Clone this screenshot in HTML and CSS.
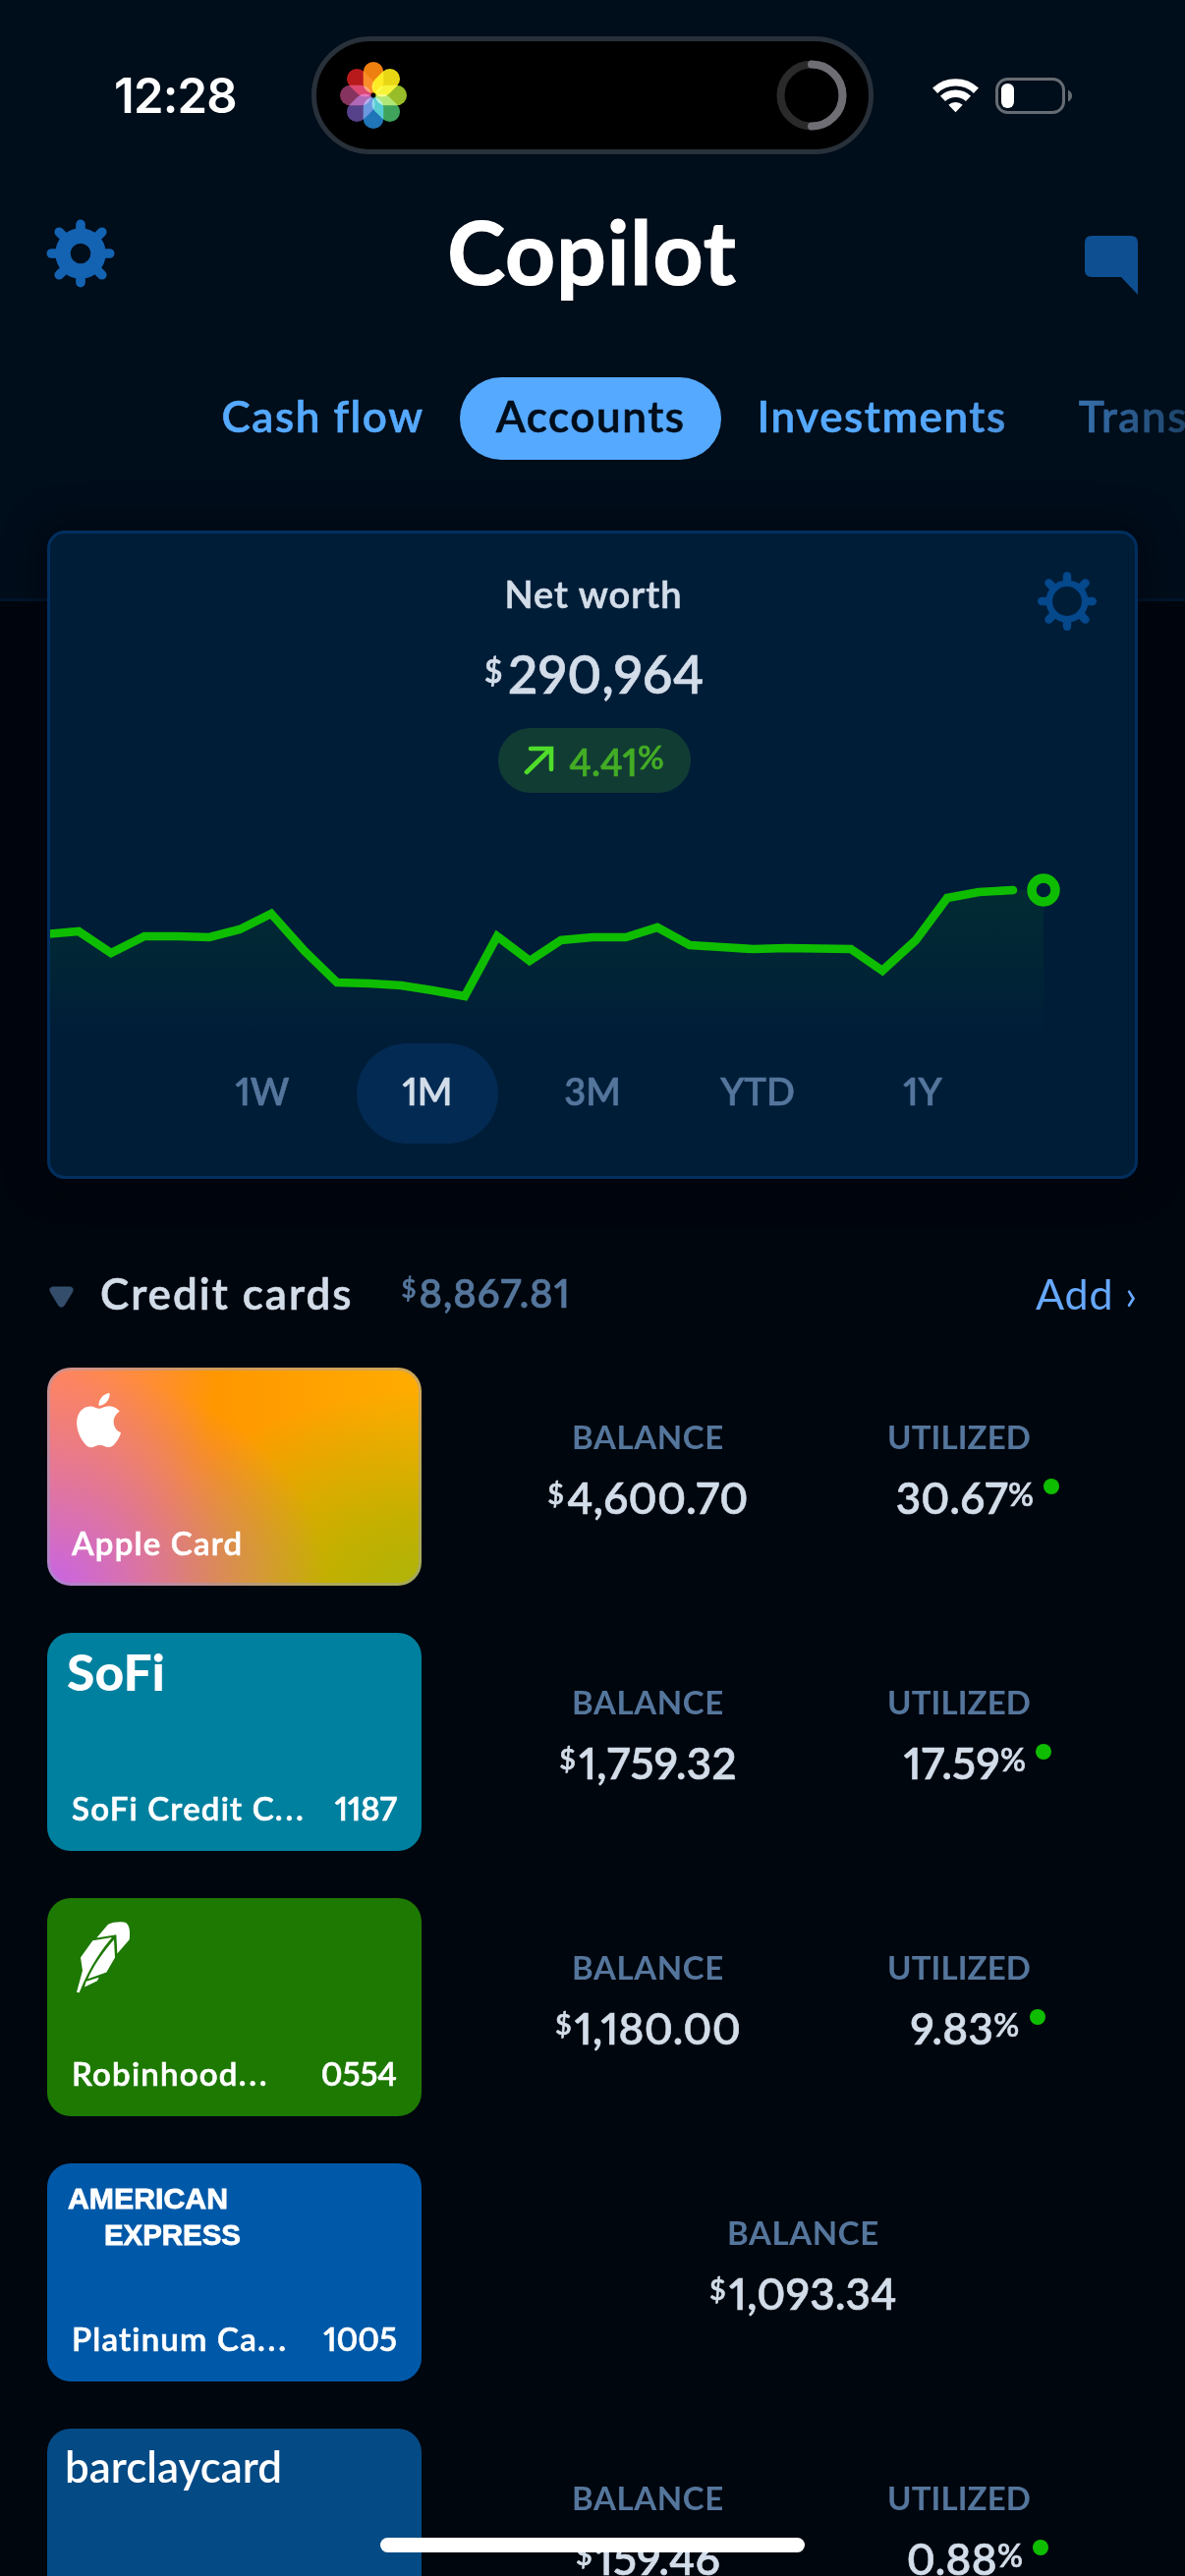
FILE: index.html
```html
<!DOCTYPE html>
<html lang="en">
<head>
    <meta charset="UTF-8">
    <meta name="viewport" content="width=device-width, initial-scale=1.0">
    <title>Copilot - Accounts</title>
    <link rel="stylesheet" href="styles.css">
</head>
<body>

    <header class="top">
        <div class="status">
            <div class="time">12:28</div>
            <div class="island">
                <svg class="photos" width="72" height="72" viewBox="-36 -36 72 72">
                    <rect x="-10.3" y="-34" width="20.6" height="32" rx="10.3" fill="#ee8010"/>
                    <rect x="-10.3" y="-34" width="20.6" height="32" rx="10.3" fill="#e8d614" transform="rotate(45)"/>
                    <rect x="-10.3" y="-34" width="20.6" height="32" rx="10.3" fill="#98bd28" transform="rotate(90)"/>
                    <rect x="-10.3" y="-34" width="20.6" height="32" rx="10.3" fill="#3fa35c" transform="rotate(135)"/>
                    <rect x="-10.3" y="-34" width="20.6" height="32" rx="10.3" fill="#2074b8" transform="rotate(180)"/>
                    <rect x="-10.3" y="-34" width="20.6" height="32" rx="10.3" fill="#56428a" transform="rotate(225)"/>
                    <rect x="-10.3" y="-34" width="20.6" height="32" rx="10.3" fill="#86345f" transform="rotate(270)"/>
                    <rect x="-10.3" y="-34" width="20.6" height="32" rx="10.3" fill="#b81a1c" transform="rotate(315)"/>
                    <circle r="2.4" fill="#000"/>
                </svg>
                <svg width="72" height="72" viewBox="-36 -36 72 72" fill="none" stroke-width="8">
                    <circle r="31.5" stroke="#2a2a2a"/>
                    <path d="M0 -31.5A31.5 31.5 0 0 1 0 31.5" stroke="#6f6e74" stroke-linecap="round"/>
                </svg>
            </div>
            <div class="signal">
                <svg width="47" height="36" viewBox="0 0 47 36">
                    <path d="M2.6 13.2A30.5 30.5 0 0 1 44.4 13.2M10.5 21.4A18.9 18.9 0 0 1 36.5 21.4" fill="none" stroke="#fff" stroke-width="7.4"/>
                    <path d="M23.5 35.2L16.3 27.8A10.8 10.8 0 0 1 30.7 27.8Z" fill="#fff"/>
                </svg>
                <svg width="78" height="37" viewBox="0 0 78 37">
                    <rect x="1.5" y="1.5" width="68" height="34" rx="11" fill="none" stroke="#666c73" stroke-width="3"/>
                    <rect x="6" y="6" width="13" height="25" rx="6.2" fill="#fff"/>
                    <path d="M74 12.5Q78 14.5 78 18.5T74 24.5Z" fill="#666c73"/>
                </svg>
            </div>
        </div>

        <div class="bar">
            <svg class="gear" width="70" height="70" viewBox="-35 -35 70 70" fill="none" stroke="#1463b3">
                <circle r="18" stroke-width="15.4"/>
                <g stroke-width="9.6" stroke-linecap="round">
                    <path d="M0 -22V-29.7M0 22V29.7M-22 0H-29.7M22 0H29.7M-15 -15L-21.8 -21.8M15 -15L21.8 -21.8M-15 15L-21.8 21.8M15 15L21.8 21.8"/>
                </g>
            </svg>
            <h1>Copilot</h1>
            <svg class="chat" width="54" height="61" viewBox="0 0 54 61">
                <path d="M7 0H47Q54 0 54 7V60L37 42H7Q0 42 0 35V7Q0 0 7 0Z" fill="#0e4f91"/>
            </svg>
        </div>

        <nav class="tabs">
            <a>Cash flow</a>
            <a class="active">Accounts</a>
            <a>Investments</a>
            <a>Transactions</a>
        </nav>
    </header>

    <main>
        <section class="networth">
            <svg class="settings" width="60" height="60" viewBox="-30 -30 60 60" fill="none" stroke="#05488b">
                <circle r="18.2" stroke-width="6.6"/>
                <g stroke-width="8.4" stroke-linecap="round">
                    <path d="M0 -20V-25.8M0 20V25.8M-20 0H-25.8M20 0H25.8M-14 -14L-18.6 -18.6M14 -14L18.6 -18.6M-14 14L-18.6 18.6M14 14L18.6 18.6"/>
                </g>
            </svg>
            <h2>Net worth</h2>
            <div class="total"><sup>$</sup>290,964</div>
            <div class="change">
                <svg width="31" height="30" viewBox="0 0 31 30" fill="none" stroke="#4fdc2a" stroke-width="4.6" stroke-linecap="round">
                    <path d="M3 27L27 3.5M7 3H28V24"/>
                </svg>
                <span>4.41<sup>%</sup></span>
            </div>

            <svg class="chart" width="1104" height="200" viewBox="51 860 1104 200">
                <defs>
                    <linearGradient id="fade" x1="0" y1="900" x2="0" y2="1052" gradientUnits="userSpaceOnUse">
                        <stop offset="0" stop-color="#0fbd00" stop-opacity=".09"/>
                        <stop offset=".6" stop-color="#0fbd00" stop-opacity=".045"/>
                        <stop offset="1" stop-color="#0fbd00" stop-opacity="0"/>
                    </linearGradient>
                </defs>
                <path fill="url(#fade)" d="M51 950L80 948L113 970L147 953L180 953L213 954L244 946L276 930L310 968L343 1000L376 1001L408 1003L440 1008L473 1014L506 953L539 978L571 957L603 954L637 954L669 944L702 962L734 964L767 966L800 965L866 966L898 988L932 957L964 914L996 908L1030 906L1062 906V1052H51Z"/>
                <polyline fill="none" stroke="#0fbd00" stroke-width="8.6" points="45,951 80,948 113,970 147,953 180,953 213,954 244,946 276,930 310,968 343,1000 376,1001 408,1003 440,1008 473,1014 506,953 539,978 571,957 603,954 637,954 669,944 702,962 734,964 767,966 800,965 866,966 898,988 932,957 964,914 996,908 1031,906"/>
                <circle cx="1031" cy="906" r="4.3" fill="#0fbd00"/>
                <circle cx="1062" cy="906" r="12" fill="#001d38" stroke="#0fbd00" stroke-width="9.4"/>
            </svg>

            <div class="periods">
                <span>1W</span>
                <span class="on">1M</span>
                <span>3M</span>
                <span>YTD</span>
                <span>1Y</span>
            </div>
        </section>

        <div class="group">
            <svg width="25" height="23" viewBox="0 0 27 24">
                <path d="M4 0H23Q28 1 26 6L17 21Q13.5 25 10 21L1 6Q-1 1 4 0Z" fill="#334d6b"/>
            </svg>
            <h3>Credit cards</h3>
            <span class="sum"><sup>$</sup>8,867.81</span>
            <a>Add ›</a>
        </div>

        <div class="rows">
            <div class="row">
                <div class="card apple">
                    <svg class="logo" viewBox="0 0 381 110">
                        <path transform="translate(25 26) scale(2.3)" d="M12.152 6.896c-.948 0-2.415-1.078-3.96-1.04-2.04.027-3.91 1.183-4.961 3.014-2.117 3.675-.546 9.103 1.519 12.09 1.013 1.454 2.208 3.09 3.792 3.039 1.52-.065 2.09-.987 3.935-.987 1.831 0 2.35.987 3.96.948 1.637-.026 2.676-1.48 3.676-2.948 1.156-1.688 1.636-3.325 1.662-3.415-.039-.013-3.182-1.221-3.22-4.857-.026-3.04 2.48-4.494 2.597-4.559-1.429-2.09-3.623-2.324-4.39-2.376-2-.156-3.675 1.09-4.61 1.09zM15.53 3.83c.843-1.012 1.4-2.427 1.245-3.83-1.207.052-2.662.805-3.532 1.818-.78.896-1.454 2.338-1.273 3.714 1.338.104 2.715-.688 3.559-1.701"/>
                    </svg>
                    <div class="name"><span>Apple Card</span></div>
                </div>
                <div class="cell"><label>Balance</label><b><sup>$</sup>4,600.70</b></div>
                <div class="cell used"><label>Utilized</label><b>30.67<sup>%</sup></b></div>
            </div>

            <div class="row">
                <div class="card sofi">
                    <svg class="logo" viewBox="0 0 381 110">
                        <text x="20" y="59" font-size="52" font-weight="900" textLength="100" lengthAdjust="spacingAndGlyphs">SoFi</text>
                    </svg>
                    <div class="name"><span>SoFi Credit C<i>...</i></span><em>1187</em></div>
                </div>
                <div class="cell"><label>Balance</label><b><sup>$</sup>1,759.32</b></div>
                <div class="cell used"><label>Utilized</label><b>17.59<sup>%</sup></b></div>
            </div>

            <div class="row">
                <div class="card robinhood">
                    <svg class="logo" viewBox="0 0 381 110">
                        <g transform="translate(30 24) scale(.3333 .3571) translate(-234 -884)">
                            <path d="M295 930L330 892C345 884 375 883 386 888C396 895 398 915 395 935L358 975L355 921Z"/>
                            <path d="M283 938L342 929C310 965 275 1010 242 1086L234 1085L252 1023L246 986Z"/>
                            <path d="M348 935L351 986L325 1028L268 1047C285 1010 315 970 348 935Z"/>
                            <path d="M263 1054L302 1043L297 1053L258 1070Z"/>
                        </g>
                    </svg>
                    <div class="name"><span>Robinhood<i>...</i></span><em>0554</em></div>
                </div>
                <div class="cell"><label>Balance</label><b><sup>$</sup>1,180.00</b></div>
                <div class="cell used"><label>Utilized</label><b>9.83<sup>%</sup></b></div>
            </div>

            <div class="row">
                <div class="card amex">
                    <svg class="logo" viewBox="0 0 381 110">
                        <text x="21" y="46" textLength="163" lengthAdjust="spacingAndGlyphs">AMERICAN</text>
                        <text x="58" y="83" textLength="139" lengthAdjust="spacingAndGlyphs">EXPRESS</text>
                    </svg>
                    <div class="name"><span>Platinum Ca<i>...</i></span><em>1005</em></div>
                </div>
                <div class="cell wide"><label>Balance</label><b><sup>$</sup>1,093.34</b></div>
            </div>

            <div class="row">
                <div class="card barclay">
                    <svg class="logo" viewBox="0 0 381 110">
                        <text x="18" y="55" font-size="45" font-weight="600" textLength="221" lengthAdjust="spacingAndGlyphs">barclaycard</text>
                    </svg>
                </div>
                <div class="cell"><label>Balance</label><b><sup>$</sup>159.46</b></div>
                <div class="cell used"><label>Utilized</label><b>0.88<sup>%</sup></b></div>
            </div>
        </div>
    </main>

    <div class="home"></div>

</body>
</html>
```
FILE: styles.css
```css
* { box-sizing: border-box; }
body { margin: 0; width: 1206px; height: 2622px; overflow: hidden; background: #00060e; color: #d2dde9; font-family: Lato, "Open Sans", sans-serif; font-weight: 600; font-variant-numeric: proportional-nums; -webkit-text-stroke: .6px; }
h1, h2, h3 { margin: 0; }
i, em { font-style: normal; }
svg { display: block; flex: none; }
sup { font-size: 65%; line-height: 0; vertical-align: 10px; }

/* status bar and header */
.top { height: 612px; background: #000d1a; border-bottom: 3px solid #00162c; }
.status { display: grid; grid-template-columns: 317px 572px 1fr; align-items: center; height: 194px; }
.time { padding-left: 40px; text-align: center; font-family: Inter, sans-serif; font-size: 49px; font-weight: 600; letter-spacing: -.8px; color: #fff; -webkit-text-stroke: 0; }
.island { display: flex; align-items: center; justify-content: space-between; height: 120px; padding: 0 22px; background: #000; border: 5px solid #28303a; border-radius: 60px; }
.photos rect { mix-blend-mode: screen; }
.signal { display: flex; align-items: center; gap: 17px; padding-left: 60px; }

.bar { display: flex; align-items: center; justify-content: space-between; height: 126px; padding: 0 48px; }
.gear { margin: 1px 0 0 -1px; }
h1 { padding-bottom: 3px; font-size: 89px; font-weight: 700; line-height: 100px; letter-spacing: 1px; color: #fff; -webkit-text-stroke: 1.2px; }
.chat { margin: 27px 0 0 16px; }

.tabs { display: flex; margin-top: 64px; padding-left: 189px; overflow: hidden; -webkit-mask-image: linear-gradient(to right, #000 80%, rgba(0,0,0,.35) 100%); mask-image: linear-gradient(to right, #000 80%, rgba(0,0,0,.35) 100%); }
.tabs a { padding: 0 36.5px; font-size: 44px; line-height: 78px; height: 84px; letter-spacing: 1.55px; white-space: nowrap; color: #55a9ff; }
.tabs .active { background: #55a9ff; color: #000d1a; border-radius: 42px; }

main { padding: 0 48px; }

/* net worth */
.networth { position: relative; display: flex; flex-direction: column; align-items: center; height: 660px; margin-top: -72px; padding-top: 38px; background: #001d38; border: 3px solid #002f5e; border-radius: 18px; box-shadow: 0 0 40px rgba(0,4,10,.6); }
.settings { position: absolute; top: 39px; right: 39px; }
.networth h2 { padding-left: 2px; font-size: 38px; font-weight: 600; line-height: 46px; letter-spacing: 1px; }
.total { margin-top: 29px; padding-left: 4px; font-size: 53px; line-height: 60px; letter-spacing: .5px; }
.total sup { font-size: 32px; vertical-align: 11px; margin-right: 5px; }
.change { display: flex; align-items: center; justify-content: center; gap: 15px; width: 196px; height: 66px; margin: 25px 0 0 3px; background: #113c33; border-radius: 33px; color: #43ad25; font-size: 38px; }
.change span { padding-top: 2px; }
.change sup { font-size: 33px; vertical-align: 7px; }
.chart { margin-top: 53px; }
.periods { display: flex; gap: 24px; margin-top: 2px; }
.periods span { width: 144px; height: 102px; line-height: 97px; text-align: center; font-size: 38px; color: #55769c; border-radius: 51px; }
.periods .on { background: #032a52; color: #d2dde9; }

/* group title */
.group { display: flex; align-items: center; height: 60px; margin: 86px 0 46px; padding-left: 2px; }
.group svg { margin-top: 8px; }
.group h3 { margin-left: 27px; font-size: 44px; font-weight: 600; letter-spacing: 2px; }
.sum { margin-left: 49px; font-size: 40px; letter-spacing: 1px; color: #55769c; }
.sum sup { margin-right: 2px; }
.group a { margin-left: auto; font-size: 43px; font-weight: 400; letter-spacing: .8px; color: #66a8ff; -webkit-text-stroke: 0; }

/* accounts */
.rows { display: grid; gap: 48px; }
.row { display: grid; grid-template-columns: 453px 317px 316px; height: 222px; }
.card { display: flex; flex-direction: column; justify-content: space-between; width: 381px; border-radius: 24px; color: #fff; overflow: hidden; }
.logo { width: 381px; height: 110px; fill: #fff; }
.name { display: flex; justify-content: space-between; padding: 0 25px 24px 25px; font-size: 33px; line-height: 40px; letter-spacing: 1.2px; }
.name i { letter-spacing: 2.8px; }
.name em { letter-spacing: -.1px; }
.apple { border: 3px solid rgba(150,160,190,.45); background: radial-gradient(ellipse 75% 100% at 0 100%, #c864e6 0, rgba(200,100,230,0) 100%), radial-gradient(ellipse 45% 90% at 0 0, #ff8560 0, rgba(255,133,96,0) 100%), radial-gradient(ellipse 75% 90% at 100% 100%, #aeb40a 0, #c4b000 35%, rgba(220,170,0,0) 100%), linear-gradient(to right, #ff8b40, #ff9700 45%, #ffad00); background-origin: border-box; }
.apple .logo { margin: -3px 0 0 -3px; }
.apple .name { padding: 0 22px 21px 22px; }
.sofi { background: #00809f; }
.robinhood { background: #1d7902; }
.amex { background: #0059a8; }
.amex text { font-family: "Liberation Sans", sans-serif; font-size: 30px; font-weight: 700; stroke: #fff; stroke-width: .8; }
.barclay { background: #044a85; }

.cell { display: flex; flex-direction: column; align-items: center; gap: 17px; padding-top: 50px; }
.cell label { font-size: 33px; font-weight: 700; line-height: 40px; letter-spacing: .6px; text-transform: uppercase; color: #55769c; -webkit-text-stroke: 0; }
.cell b { position: relative; font-size: 44px; font-weight: 600; line-height: 50px; letter-spacing: .3px; }
.cell sup { margin-right: 3px; font-size: 66%; }
.used sup { margin-right: 0; font-size: 73%; vertical-align: 8px; }
.wide { grid-column: 2 / 4; }
.used label { letter-spacing: .1px; }
.used b { margin-left: 12px; }
.used b::after { content: ""; position: absolute; top: 6px; right: -26px; width: 16px; height: 16px; border-radius: 50%; background: #0fbd00; }

.home { position: fixed; left: 387px; bottom: 24px; width: 432px; height: 15px; border-radius: 8px; background: #fff; }
```
